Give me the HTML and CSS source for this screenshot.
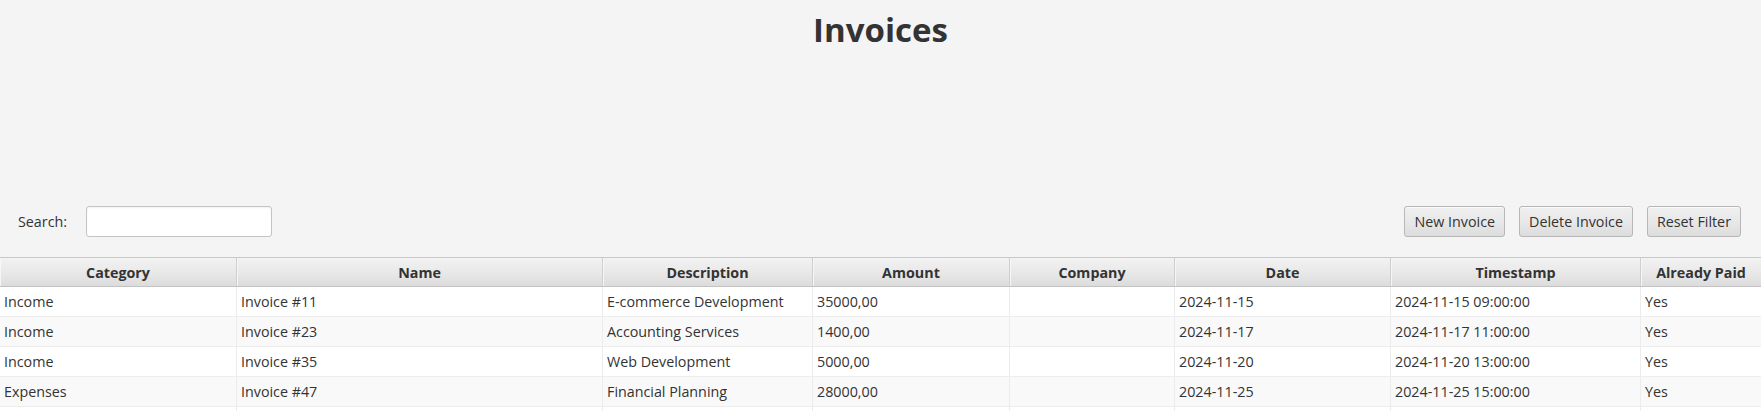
FILE: index.html
```html
<!DOCTYPE html>
<html lang="en">
<head>
<meta charset="utf-8">
<title>Invoices</title>
<link rel="stylesheet" href="styles.css">
</head>
<body>
<div class="app">
  <h1 class="title">Invoices</h1>
  <div class="toolbar">
    <div class="search">
      <label class="search-label" for="q">Search:</label>
      <input class="search-field" id="q" type="text">
    </div>
    <div class="actions">
      <button class="btn">New Invoice</button>
      <button class="btn">Delete Invoice</button>
      <button class="btn">Reset Filter</button>
    </div>
  </div>
  <div class="table">
    <div class="row head">
      <div class="cell">Category</div>
      <div class="cell">Name</div>
      <div class="cell">Description</div>
      <div class="cell">Amount</div>
      <div class="cell">Company</div>
      <div class="cell">Date</div>
      <div class="cell">Timestamp</div>
      <div class="cell">Already Paid</div>
    </div>
    <div class="row">
      <div class="cell">Income</div>
      <div class="cell">Invoice #11</div>
      <div class="cell">E-commerce Development</div>
      <div class="cell">35000,00</div>
      <div class="cell"></div>
      <div class="cell">2024-11-15</div>
      <div class="cell">2024-11-15 09:00:00</div>
      <div class="cell">Yes</div>
    </div>
    <div class="row">
      <div class="cell">Income</div>
      <div class="cell">Invoice #23</div>
      <div class="cell">Accounting Services</div>
      <div class="cell">1400,00</div>
      <div class="cell"></div>
      <div class="cell">2024-11-17</div>
      <div class="cell">2024-11-17 11:00:00</div>
      <div class="cell">Yes</div>
    </div>
    <div class="row">
      <div class="cell">Income</div>
      <div class="cell">Invoice #35</div>
      <div class="cell">Web Development</div>
      <div class="cell">5000,00</div>
      <div class="cell"></div>
      <div class="cell">2024-11-20</div>
      <div class="cell">2024-11-20 13:00:00</div>
      <div class="cell">Yes</div>
    </div>
    <div class="row">
      <div class="cell">Expenses</div>
      <div class="cell">Invoice #47</div>
      <div class="cell">Financial Planning</div>
      <div class="cell">28000,00</div>
      <div class="cell"></div>
      <div class="cell">2024-11-25</div>
      <div class="cell">2024-11-25 15:00:00</div>
      <div class="cell">Yes</div>
    </div>
    <div class="row">
      <div class="cell"></div>
      <div class="cell"></div>
      <div class="cell"></div>
      <div class="cell"></div>
      <div class="cell"></div>
      <div class="cell"></div>
      <div class="cell"></div>
      <div class="cell"></div>
    </div>
  </div>
</div>
</body>
</html>
```

FILE: styles.css
```css
* { box-sizing: border-box; }

html, body {
  margin: 0;
  padding: 0;
  background: #f4f4f4;
  overflow: hidden;
}

body {
  font-family: "Open Sans", "Noto Sans", sans-serif;
  font-size: 14.3px;
  color: #333333;
}

.app {
  display: flex;
  flex-direction: column;
  width: 1761px;
  height: 411px;
  overflow: hidden;
}

.title {
  margin: 7px 0 0 0;
  height: 45px;
  line-height: 45px;
  font-size: 33px;
  font-weight: 700;
  text-align: center;
  color: #333333;
}

.toolbar {
  display: flex;
  justify-content: space-between;
  align-items: center;
  margin-top: 154px;
  padding: 0 20px 0 18px;
  height: 31px;
  flex: none;
}

.search {
  display: flex;
  align-items: center;
  gap: 19px;
}

.search-label {
  color: #333333;
}

.search-field {
  width: 186px;
  height: 31px;
  border: 1px solid #c4c4c4;
  border-radius: 3px;
  background: #ffffff;
  box-shadow: inset 0 1px 2px rgba(0, 0, 0, 0.06);
  font: inherit;
  padding: 0 6px;
  outline: none;
}

.actions {
  display: flex;
  gap: 14px;
}

.btn {
  height: 31px;
  padding: 0 9px;
  border: 1px solid #b7b7b7;
  border-radius: 3px;
  background: linear-gradient(to bottom, #f0f0f0 0%, #e6e6e6 60%, #dcdcdc 100%);
  box-shadow: inset 0 1px 0 #fafafa;
  font-family: "Open Sans", "Noto Sans", sans-serif;
  font-size: 14.3px;
  color: #333333;
}

.table {
  margin-top: 20px;
  display: flex;
  flex-direction: column;
  background: #ffffff;
  flex: none;
}

.row {
  display: grid;
  grid-template-columns: 237px 366px 210px 197px 165px 216px 250px 120px;
  height: 30px;
  border-bottom: 1px solid #ededed;
  background: #ffffff;
}

.row:nth-child(odd) {
  background: #f9f9f9;
}

.row.head {
  border-top: 1px solid #c9c9c9;
  border-bottom: 1px solid #c2c2c2;
  background: linear-gradient(to bottom, #f2f2f2 0%, #e8e8e8 55%, #dcdcdc 100%);
  font-weight: 700;
}

.cell {
  display: flex;
  align-items: center;
  padding-left: 4px;
  border-right: 1px solid #ececec;
  white-space: nowrap;
  overflow: hidden;
}

.head .cell {
  justify-content: center;
  padding-left: 0;
  border-right: 1px solid #cfcfcf;
  box-shadow: inset 1px 0 0 #f6f6f6;
}

.cell:last-child {
  border-right: none;
}
```
